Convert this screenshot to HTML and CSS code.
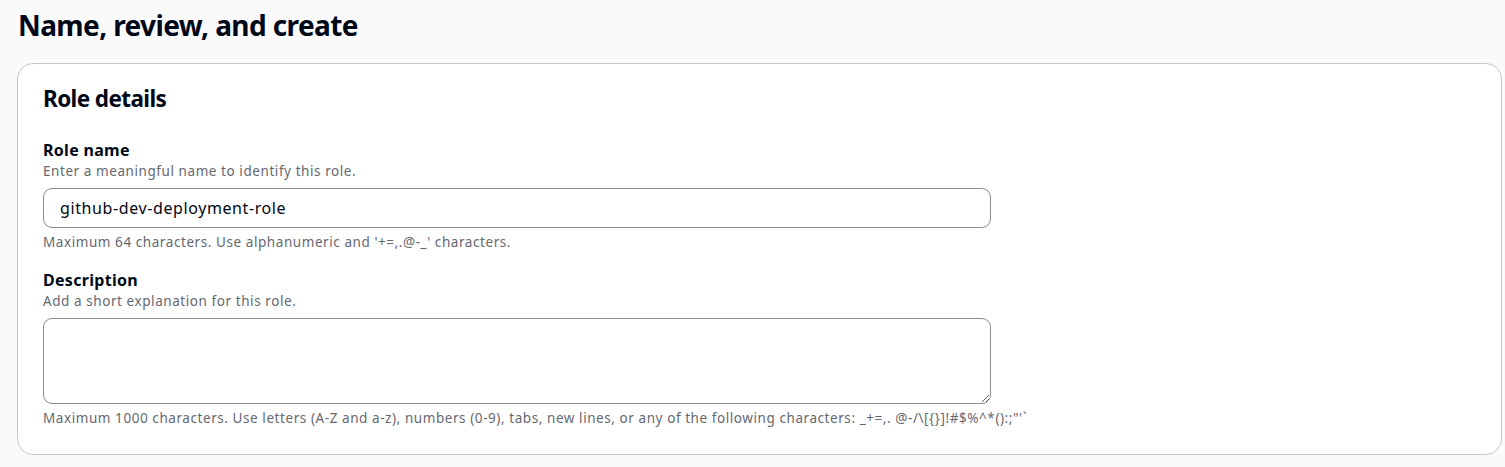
FILE: index.html
```html
<!DOCTYPE html>
<html lang="en">
<head>
<meta charset="utf-8">
<title>Name, review, and create</title>
<link rel="stylesheet" href="styles.css">
</head>
<body>
<main class="page">
  <h1 class="page-title">Name, review, and create</h1>
  <section class="card">
    <h2 class="card-title">Role details</h2>
    <div class="field">
      <label class="field-label" for="role-name">Role name</label>
      <div class="field-desc">Enter a meaningful name to identify this role.</div>
      <input class="input" id="role-name" type="text" value="github-dev-deployment-role">
      <div class="field-hint">Maximum 64 characters. Use alphanumeric and '+=,.@-_' characters.</div>
    </div>
    <div class="field">
      <label class="field-label" for="role-desc">Description</label>
      <div class="field-desc">Add a short explanation for this role.</div>
      <textarea class="textarea" id="role-desc"></textarea>
      <div class="field-hint">Maximum 1000 characters. Use letters (A-Z and a-z), numbers (0-9), tabs, new lines, or any of the following characters: _+=,. @-/\[{}]!#$%^*():;"'`</div>
    </div>
  </section>
</main>
</body>
</html>
```

FILE: styles.css
```css
* { box-sizing: border-box; }
html, body {
  margin: 0;
  padding: 0;
  background: #fafafa;
  color: #000716;
  font-family: "Noto Sans", "Open Sans", Arial, sans-serif;
}
.page {
  padding: 6px 3px 0 17px;
}
.page-title {
  margin: 0 0 19px 1px;
  font-size: 28px;
  line-height: 38px;
  font-weight: 700;
  letter-spacing: -0.6px;
}
.card {
  background: #ffffff;
  border: 1px solid #c6c6cd;
  border-radius: 16px;
  padding: 20px 25px 26px;
}
.card-title {
  margin: 0 0 25px;
  font-size: 22.5px;
  line-height: 30px;
  font-weight: 700;
  letter-spacing: -0.6px;
}
.field { margin-bottom: 17px; }
.field:last-child { margin-bottom: 0; }
.field-label {
  display: block;
  font-size: 16px;
  line-height: 22px;
  font-weight: 700;
  letter-spacing: 0.3px;
}
.field-desc, .field-hint {
  font-size: 13.5px;
  line-height: 20px;
  color: #656871;
  letter-spacing: 0.57px;
}
.field-desc { margin-bottom: 7px; }
.field-hint { margin-top: 4px; }
.input, .textarea {
  display: block;
  width: 948px;
  border: 1px solid #8c8c94;
  border-radius: 9px;
  background: #fff;
  font-family: inherit;
  font-size: 16px;
  letter-spacing: 0.6px;
  color: #000716;
  padding: 0 16px;
}
.input { height: 40px; }
.textarea { height: 86px; resize: vertical; }
```
